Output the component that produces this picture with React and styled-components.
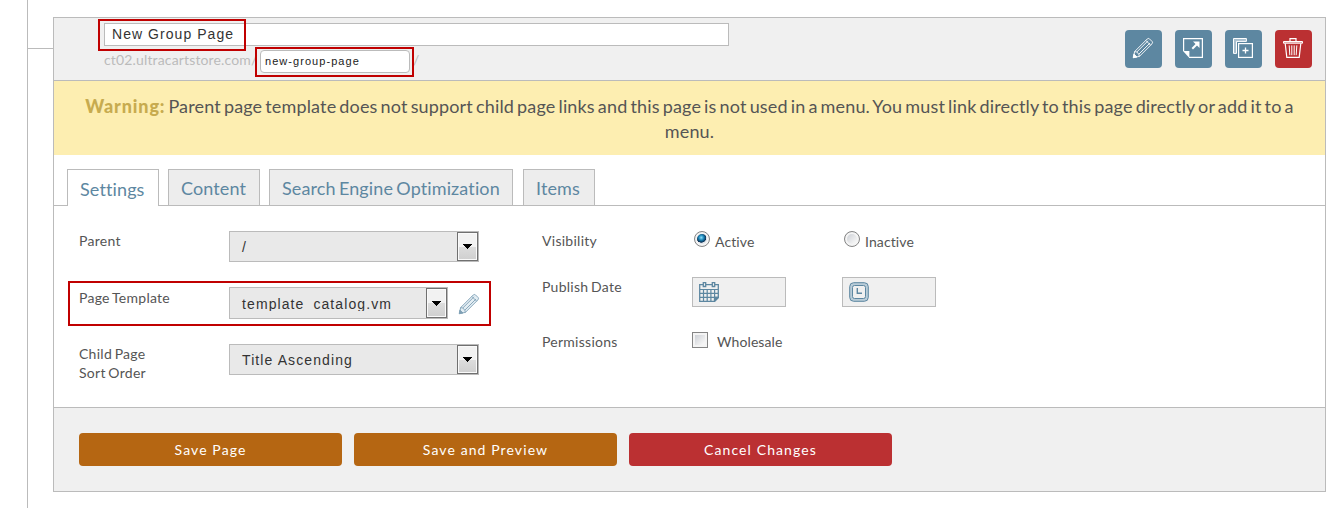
import React from 'react';
import styled, { createGlobalStyle } from 'styled-components';

const tabs = [
  { name: 'Settings', width: 92, active: true },
  { name: 'Content', width: 92 },
  { name: 'Search Engine Optimization', width: 244 },
  { name: 'Items', width: 72 },
];

const PencilIcon = ({ color = '#fff', fill = 'none' }) => (
  <svg width="22" height="22" viewBox="0 0 22 22" fill="none" stroke={color} strokeWidth="0.9" strokeLinejoin="round">
    <path d="M1.5 20.5 L2.6 14.6 L15.2 2 Q16.2 1 17.4 1.8 L20.2 4.6 Q21 5.8 20 6.8 L7.4 19.4 Z" fill={fill} />
    <path d="M2.6 14.6 L4.8 15 L6.8 17.2 L7.4 19.4" />
    <path d="M4.8 15 L16 3.8 M6.8 17.2 L18 6" />
    <path d="M13.8 3.4 L18.6 8.2" />
    <path d="M1.2 20.8 L1.9 17 L5 20 Z" fill={color} />
  </svg>
);

const OpenIcon = () => (
  <svg width="22" height="22" viewBox="0 0 22 22" fill="none" stroke="#fff" strokeWidth="1.2">
    <path d="M1.6 14 V1.6 H20.4 V20.4 H7" />
    <path d="M1 14 H7.4 V21 Z" fill="#fff" stroke="none" />
    <path d="M10.3 11.7 L15.5 6.5" strokeWidth="2" />
    <path d="M11 4.5 H17.5 V11 Z" fill="#fff" stroke="none" />
  </svg>
);

const CopyIcon = () => (
  <svg width="22" height="22" viewBox="0 0 22 22" fill="none" stroke="#fff">
    <rect x="6.6" y="6.6" width="13.8" height="13.8" strokeWidth="1.2" />
    <path d="M13.5 10.5 V16.5 M10.5 13.5 H16.5" strokeWidth="1.3" />
    <path d="M4.5 16.4 H1.5 V1.5 H14.4 V4.4 H4.5 Z" strokeWidth="1" fill="#a9c0cf" />
  </svg>
);

const TrashIcon = () => (
  <svg width="22" height="22" viewBox="0 0 22 22" fill="none" stroke="#fff" strokeWidth="1.2">
    <path d="M8 4 V1.6 H14 V4" />
    <path d="M1.5 4.5 H20.5 V6.2 H1.5 Z" strokeWidth="1" fill="#d98a8b" />
    <path d="M3.2 6.5 L4.8 20.4 H17.2 L18.8 6.5" />
    <path d="M7.2 8.4 L7.8 18.2 M14.8 8.4 L14.2 18.2 M9.8 8.4 V18.2 M12.2 8.4 V18.2" strokeWidth="1" />
  </svg>
);

const CalendarIcon = () => (
  <svg width="20" height="20" viewBox="0 0 20 20" fill="none" stroke="#5d87a1" strokeWidth="1.3">
    <path d="M4 2.7 H0.7 V19.3 H15.5 L19.3 15.5 V2.7 H16 M7 2.7 H13" />
    <path d="M4.3 0.7 H6.7 V4.5 H4.3 Z M13.3 0.7 H15.7 V4.5 H13.3 Z" />
    <path d="M1 7.5 H19 M1 11.4 H19 M1 15.3 H19 M4.5 7.5 V19 M8.2 7.5 V19 M11.9 7.5 V19 M15.6 7.5 V19" strokeWidth="1.2" />
    <path d="M15.5 19.3 V15.5 H19.3 Z" fill="#5d87a1" />
  </svg>
);

const ClockIcon = () => (
  <svg width="20" height="20" viewBox="0 0 20 20" fill="none" stroke="#5d87a1">
    <rect x="0.7" y="0.7" width="18.6" height="18.6" rx="4" strokeWidth="1" fill="#b9ccd8" />
    <rect x="3.5" y="3.5" width="13" height="13" rx="2" strokeWidth="1" fill="#f0f0f0" />
    <path d="M8.3 6 V11.3 H13" strokeWidth="1.4" />
  </svg>
);

const SelectBox = ({ value, width, height = 31 }) => (
  <Select $width={width} $height={height}>
    <SelectValue $height={height}>{value}</SelectValue>
    <SelectArrow>
      <svg width="9" height="5" viewBox="0 0 9 5" shapeRendering="crispEdges">
        <path d="M0 0 H9 L4.5 5 Z" fill="#000" />
      </svg>
    </SelectArrow>
  </Select>
);

const App = () => {
  return (
    <Page>
      <GlobalStyle />
      <Rail>
        <Branch />
      </Rail>
      <Panel>
        <Header>
          <TitleFields>
            <TitleInput>
              New Group Page
              <Highlight $top={-5} $left={-7} $width={148} $height={32} />
            </TitleInput>
            <UrlRow>
              <UrlText>ct02.ultracartstore.com/</UrlText>
              <SlugInput>
                new-group-page
                <Highlight $top={-4} $left={-6} $width={159} $height={30} />
              </SlugInput>
              <UrlText>/</UrlText>
            </UrlRow>
          </TitleFields>
          <Actions>
            <IconButton><PencilIcon /></IconButton>
            <IconButton><OpenIcon /></IconButton>
            <IconButton><CopyIcon /></IconButton>
            <IconButton $danger><TrashIcon /></IconButton>
          </Actions>
        </Header>
        <Warning>
          <strong>Warning:</strong> Parent page template does not support child page links and this page is not used in a menu. You must link directly to this page directly or add it to a menu.
        </Warning>
        <TabBar>
          {tabs.map((tab) => (
            <Tab key={tab.name} $width={tab.width} $active={tab.active}>{tab.name}</Tab>
          ))}
        </TabBar>
        <Form>
          <LeftColumn>
            <Field $height={56}>
              <Label>Parent</Label>
              <SelectBox value="/" width={250} />
            </Field>
            <Field $height={57}>
              <Label $offset={1}>Page Template</Label>
              <SelectBox value="template_catalog.vm" width={219} height={32} />
              <EditLink><PencilIcon color="#7fa0b5" fill="#e3edf3" /></EditLink>
              <Highlight $top={-6} $left={-11} $width={423} $height={45} />
            </Field>
            <Field $height={50}>
              <Label>Child Page<br />Sort Order</Label>
              <SelectBox value="Title Ascending" width={250} />
            </Field>
          </LeftColumn>
          <RightColumn>
            <Field $height={46}>
              <Label>Visibility</Label>
              <Choice><Radio $checked />Active</Choice>
              <Choice><Radio />Inactive</Choice>
            </Field>
            <Field $height={55}>
              <Label>Publish Date</Label>
              <DateInput><CalendarIcon /></DateInput>
              <DateInput><ClockIcon /></DateInput>
            </Field>
            <Field $height={40}>
              <Label>Permissions</Label>
              <Choice $lineHeight={19}><Checkbox />Wholesale</Choice>
            </Field>
          </RightColumn>
        </Form>
        <Footer>
          <Button>Save Page</Button>
          <Button>Save and Preview</Button>
          <Button $danger>Cancel Changes</Button>
        </Footer>
      </Panel>
    </Page>
  );
};

const GlobalStyle = createGlobalStyle`
  * {
    box-sizing: border-box;
  }

  body {
    margin: 0;
    background: #fff;
    color: #555;
    font-family: Lato, sans-serif;
    font-variant-ligatures: none;
    overflow: hidden;
  }

  svg {
    display: block;
  }
`;

const Page = styled.div`
  display: flex;
  height: 508px;
  padding-left: 27px;
`;

const Rail = styled.div`
  width: 26px;
  border-left: 1px solid #bbb;
`;

const Branch = styled.div`
  margin-top: 48px;
  height: 1px;
  background: #bbb;
`;

const Panel = styled.div`
  display: flex;
  flex-direction: column;
  width: 1273px;
  height: 475px;
  margin-top: 17px;
  border: 1px solid #bbb;
`;

const Header = styled.div`
  display: flex;
  justify-content: space-between;
  height: 63px;
  padding: 5px 13px 0 50px;
  background: #f0f0f0;
  border-bottom: 1px solid #bbb;
`;

const TitleFields = styled.div`
  width: 625px;
`;

const TitleInput = styled.div`
  position: relative;
  height: 23px;
  padding-left: 7px;
  background: #fff;
  border: 1px solid #bbb;
  color: #333;
  font: 14px/21px 'Liberation Sans', Arial, sans-serif;
  letter-spacing: 1.05px;
`;

const UrlRow = styled.div`
  display: flex;
  padding-top: 4px;
`;

const UrlText = styled.span`
  color: #bbb;
  font-size: 14px;
  line-height: 19px;
  letter-spacing: 0.15px;
  min-width: 4px;

  &:first-child {
    width: 156px;
  }

  &:last-child {
    margin-left: 3px;
  }
`;

const SlugInput = styled.div`
  position: relative;
  width: 150px;
  height: 23px;
  padding-left: 4px;
  background: #fff;
  border: 1px solid #bbb;
  border-radius: 4px;
  color: #222;
  font: 11px/21px 'Liberation Sans', Arial, sans-serif;
  letter-spacing: 1.05px;
`;

const Highlight = styled.div`
  position: absolute;
  top: ${(props) => props.$top}px;
  left: ${(props) => props.$left}px;
  width: ${(props) => props.$width}px;
  height: ${(props) => props.$height}px;
  border: 2px solid #c00000;
  pointer-events: none;
`;

const Actions = styled.div`
  display: flex;
  gap: 13px;
  padding-top: 7px;
`;

const IconButton = styled.div`
  width: 37px;
  height: 38px;
  padding: 7px 0 0 7px;
  border-radius: 4px;
  background: ${(props) => (props.$danger ? '#bb3032' : '#5d87a1')};
`;

const Warning = styled.div`
  height: 74px;
  padding: 13px 30px 0;
  background: #fdeeb1;
  font-size: 18px;
  line-height: 25px;
  text-align: center;
  letter-spacing: 0.15px;
  word-spacing: -1.7px;

  strong {
    color: #c7ab4f;
    font-weight: 900;
    letter-spacing: 0.85px;
  }
`;

const TabBar = styled.div`
  display: flex;
  gap: 9px;
  height: 51px;
  padding: 14px 0 0 13px;
  border-bottom: 1px solid #bbb;
`;

const Tab = styled.div`
  width: ${(props) => props.$width}px;
  height: ${(props) => (props.$active ? 37 : 36)}px;
  padding-left: 12px;
  border: 1px solid #bbb;
  border-bottom: 0;
  background: ${(props) => (props.$active ? '#fff' : '#ededed')};
  color: #5d87a1;
  font-size: 18px;
  line-height: ${(props) => (props.$active ? 39 : 37)}px;
  white-space: nowrap;
  letter-spacing: 0.12px;
  word-spacing: -1.5px;

  &:last-child {
    margin-left: 1px;
  }
`;

const Form = styled.div`
  display: flex;
  height: 201px;
  padding: 25px 0 0 25px;
`;

const LeftColumn = styled.div`
  width: 463px;
`;

const RightColumn = styled.div`
  flex: 1;
`;

const Field = styled.div`
  position: relative;
  display: flex;
  align-items: flex-start;
  height: ${(props) => props.$height}px;
`;

const Label = styled.div`
  width: 150px;
  padding-top: ${(props) => props.$offset || 0}px;
  font-size: 14px;
  line-height: 19px;
  letter-spacing: 0.27px;
  word-spacing: -1.2px;
`;

const Select = styled.div`
  display: flex;
  justify-content: space-between;
  width: ${(props) => props.$width}px;
  height: ${(props) => props.$height}px;
  border: 1px solid #bbb;
  background: #e9e9e9;
`;

const SelectValue = styled.div`
  height: ${(props) => (props.$height === 32 ? 23 : 27)}px;
  padding: ${(props) => props.$height - 24}px 0 0 12px;
  overflow: hidden;
  color: #333;
  font: 14px/16px 'Liberation Sans', Arial, sans-serif;
  letter-spacing: 1.1px;
`;

const SelectArrow = styled.div`
  display: flex;
  align-items: center;
  justify-content: center;
  width: 21px;
  border: 1px solid #707070;
  background: linear-gradient(#f2f2f2 50%, #dddddd 50%, #cfcfcf);
  box-shadow: inset 0 0 0 1px #fafafa;
`;

const EditLink = styled.div`
  padding: 6px 0 0 10px;
`;

const Choice = styled.div`
  display: flex;
  width: 150px;
  font-size: 14px;
  line-height: ${(props) => props.$lineHeight || 21}px;
  letter-spacing: 0.1px;
`;

const Radio = styled.span`
  width: 16px;
  height: 16px;
  margin: 0 5px 0 2px;
  border: 1px solid #858585;
  border-radius: 50%;
  box-shadow: inset 0 0 0 2px #f4f4f4;
  background: ${(props) =>
    props.$checked
      ? 'radial-gradient(circle at 45% 40%, #8fe0fb 0, #1c86b8 22%, #0b2c50 42%, #dfe3e8 46%)'
      : 'linear-gradient(135deg, #c4c8cf, #f5f5f5 75%)'};
`;

const DateInput = styled.div`
  width: 94px;
  height: 30px;
  margin-right: 56px;
  padding: 4px 0 0 6px;
  border: 1px solid #bbb;
  background: #f0f0f0;
`;

const Checkbox = styled.span`
  width: 16px;
  height: 16px;
  margin-right: 9px;
  border: 1px solid #858585;
  box-shadow: inset 0 0 0 2px #f4f4f4;
  background: linear-gradient(135deg, #c4c8cf, #f5f5f5 75%);
`;

const Footer = styled.div`
  display: flex;
  gap: 12px;
  flex: 1;
  padding: 25px;
  background: #f0f0f0;
  border-top: 1px solid #bbb;
`;

const Button = styled.div`
  width: 263px;
  height: 33px;
  border-radius: 4px;
  background: ${(props) => (props.$danger ? '#bb3032' : '#b56612')};
  color: #fff;
  font-size: 14px;
  line-height: 34px;
  letter-spacing: 1.1px;
  text-align: center;
`;

export default App;
